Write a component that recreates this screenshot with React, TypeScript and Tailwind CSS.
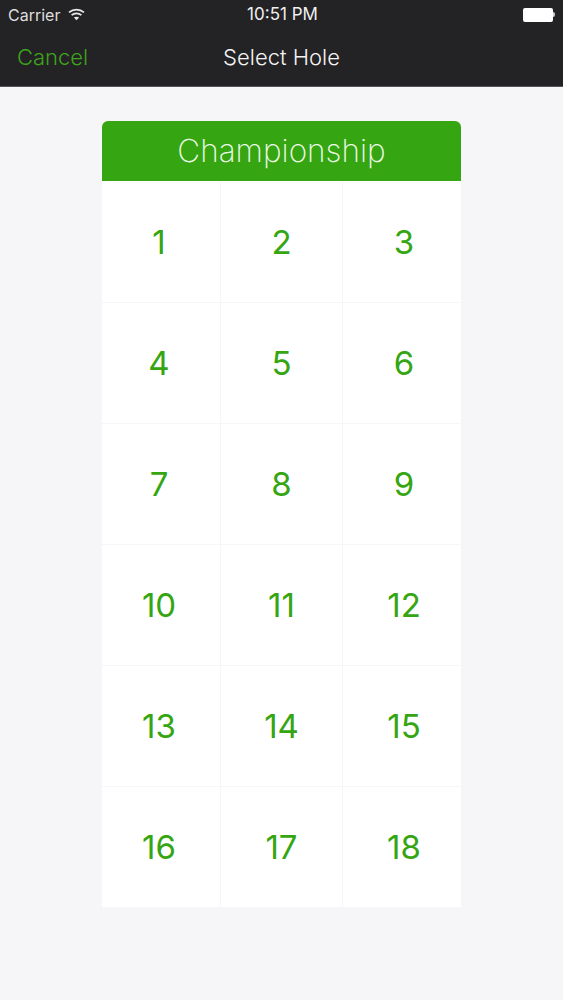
import { Fragment } from "react";

const HOLES = [
  ["1", "2", "3"],
  ["4", "5", "6"],
  ["7", "8", "9"],
  ["10", "11", "12"],
  ["13", "14", "15"],
  ["16", "17", "18"],
];

function WifiIcon() {
  return (
    <svg width="17" height="13" viewBox="0 0 17 13" fill="none" stroke="#e8e8e8" strokeWidth="1.7">
      <path d="M1 4.4C5.3 0.6 11.7 0.6 16 4.4" />
      <path d="M3.6 7.1C6.4 4.7 10.6 4.7 13.4 7.1" />
      <path d="M8.5 12.2L5.9 9.5C7.4 8.4 9.6 8.4 11.1 9.5Z" fill="#e8e8e8" stroke="none" />
    </svg>
  );
}

function BatteryIcon() {
  return (
    <div className="flex items-center">
      <div className="h-[14px] w-[30px] rounded-[2px] bg-white" />
      <div className="h-[5px] w-[2px] rounded-r-sm bg-[#cfcfcf]" />
    </div>
  );
}

export default function App() {
  return (
    <div className="flex h-[1000px] w-[563px] flex-col bg-[#f6f6f9] font-['Inter',sans-serif]">
      {/* Status + nav bar */}
      <div className="h-[87px] border-b border-[#55555a] bg-[#232225]">
        <div className="flex h-[29px] items-center justify-between pr-[8px] pl-2">
          <div className="flex w-[120px] items-center gap-[8px] text-[16px] text-[#dedede]">
            <span>Carrier</span>
            <WifiIcon />
          </div>
          <span className="ml-[2px] text-[17px] font-normal text-[#f0f0f0]">10:51 PM</span>
          <div className="flex w-[120px] justify-end">
            <BatteryIcon />
          </div>
        </div>
        <div className="relative flex h-[56px] items-center justify-center">
          <span className="absolute left-[17px] text-[22px] font-light text-[#3fa41c]">Cancel</span>
          <span className="text-[22px] font-light text-[#f4f4f4]">Select Hole</span>
        </div>
      </div>

      {/* Hole picker */}
      <div className="mt-[34px] ml-[102px] w-[359px]">
        <div className="flex h-[60px] items-center justify-center rounded-t-[6px] bg-[#35a512] text-[31.5px] font-extralight text-[#ecf8e6]">
          Championship
        </div>
        <div className="grid grid-cols-[118px_123px_118px] bg-white text-[33px] font-normal text-[#35a512]">
          {HOLES.map((row, i) => (
            <Fragment key={i}>
              {row.map((hole, j) => (
                <div
                  key={hole}
                  className={`flex h-[121px] items-center justify-center border-[#f6f6f8] pt-[2px] ${
                    i > 0 ? "border-t" : ""
                  } ${j === 1 ? "border-x" : ""} ${j === 0 ? "pr-[4px]" : ""} ${j === 2 ? "pl-[4px]" : ""}`}
                >
                  {hole}
                </div>
              ))}
            </Fragment>
          ))}
        </div>
      </div>
    </div>
  );
}
